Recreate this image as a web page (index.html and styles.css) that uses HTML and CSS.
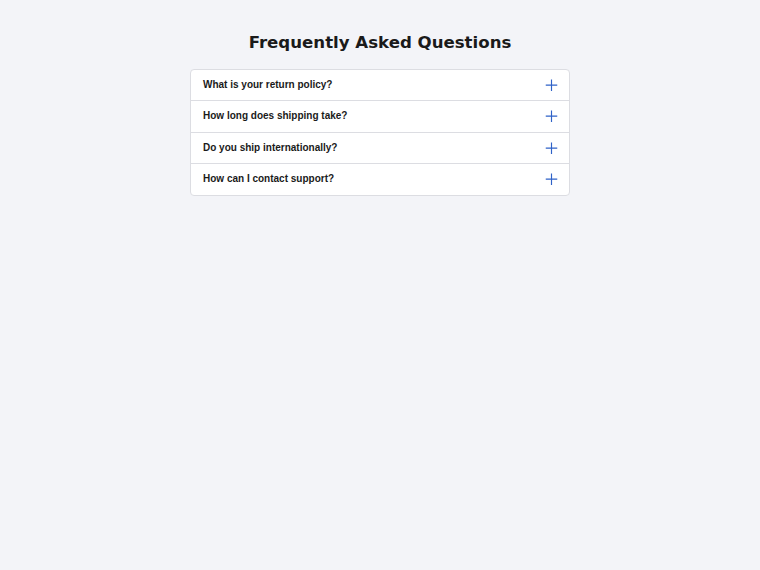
FILE: index.html
```html
<!DOCTYPE html>
<html lang="en">
<head>
    <meta charset="UTF-8">
    <meta name="viewport" content="width=device-width, initial-scale=1.0">
    <title>FAQ</title>
    <link rel="stylesheet" href="styles.css">
</head>
<body>
    <div class="container">
        <h1>Frequently Asked Questions</h1>
        <div class="faq">
            <div class="faq-item">
                <span>What is your return policy?</span>
                <svg class="plus" viewBox="0 0 14 14"><path d="M7 0.5V13.5M0.5 7H13.5"/></svg>
            </div>
            <div class="faq-item">
                <span>How long does shipping take?</span>
                <svg class="plus" viewBox="0 0 14 14"><path d="M7 0.5V13.5M0.5 7H13.5"/></svg>
            </div>
            <div class="faq-item">
                <span>Do you ship internationally?</span>
                <svg class="plus" viewBox="0 0 14 14"><path d="M7 0.5V13.5M0.5 7H13.5"/></svg>
            </div>
            <div class="faq-item">
                <span>How can I contact support?</span>
                <svg class="plus" viewBox="0 0 14 14"><path d="M7 0.5V13.5M0.5 7H13.5"/></svg>
            </div>
        </div>
    </div>
</body>
</html>
```

FILE: styles.css
```css
body {
    margin: 0;
    padding: 0;
    background-color: #f3f4f8;
    font-family: "Liberation Sans", Arial, sans-serif;
}
.container {
    width: 380px;
    margin: 0 auto;
    padding-top: 32px;
}
h1 {
    margin: 0 0 15px;
    text-align: center;
    font-family: "DejaVu Sans", sans-serif;
    font-size: 16.6px;
    line-height: 22px;
    color: #1a1a1a;
}
.faq {
    background: #fff;
    border: 1px solid #dcdde2;
    border-radius: 4px;
}
.faq-item {
    display: flex;
    align-items: center;
    justify-content: space-between;
    padding: 9px 11px 9px 12px;
    line-height: 12.4px;
    font-size: 10px;
    font-weight: bold;
    color: #1a1a1a;
    border-top: 1px solid #dcdde2;
}
.faq-item:first-child {
    border-top: none;
}
.plus {
    width: 13px;
    height: 12.4px;
    fill: none;
    stroke: #2f62c8;
    stroke-width: 1.3;
}
```
